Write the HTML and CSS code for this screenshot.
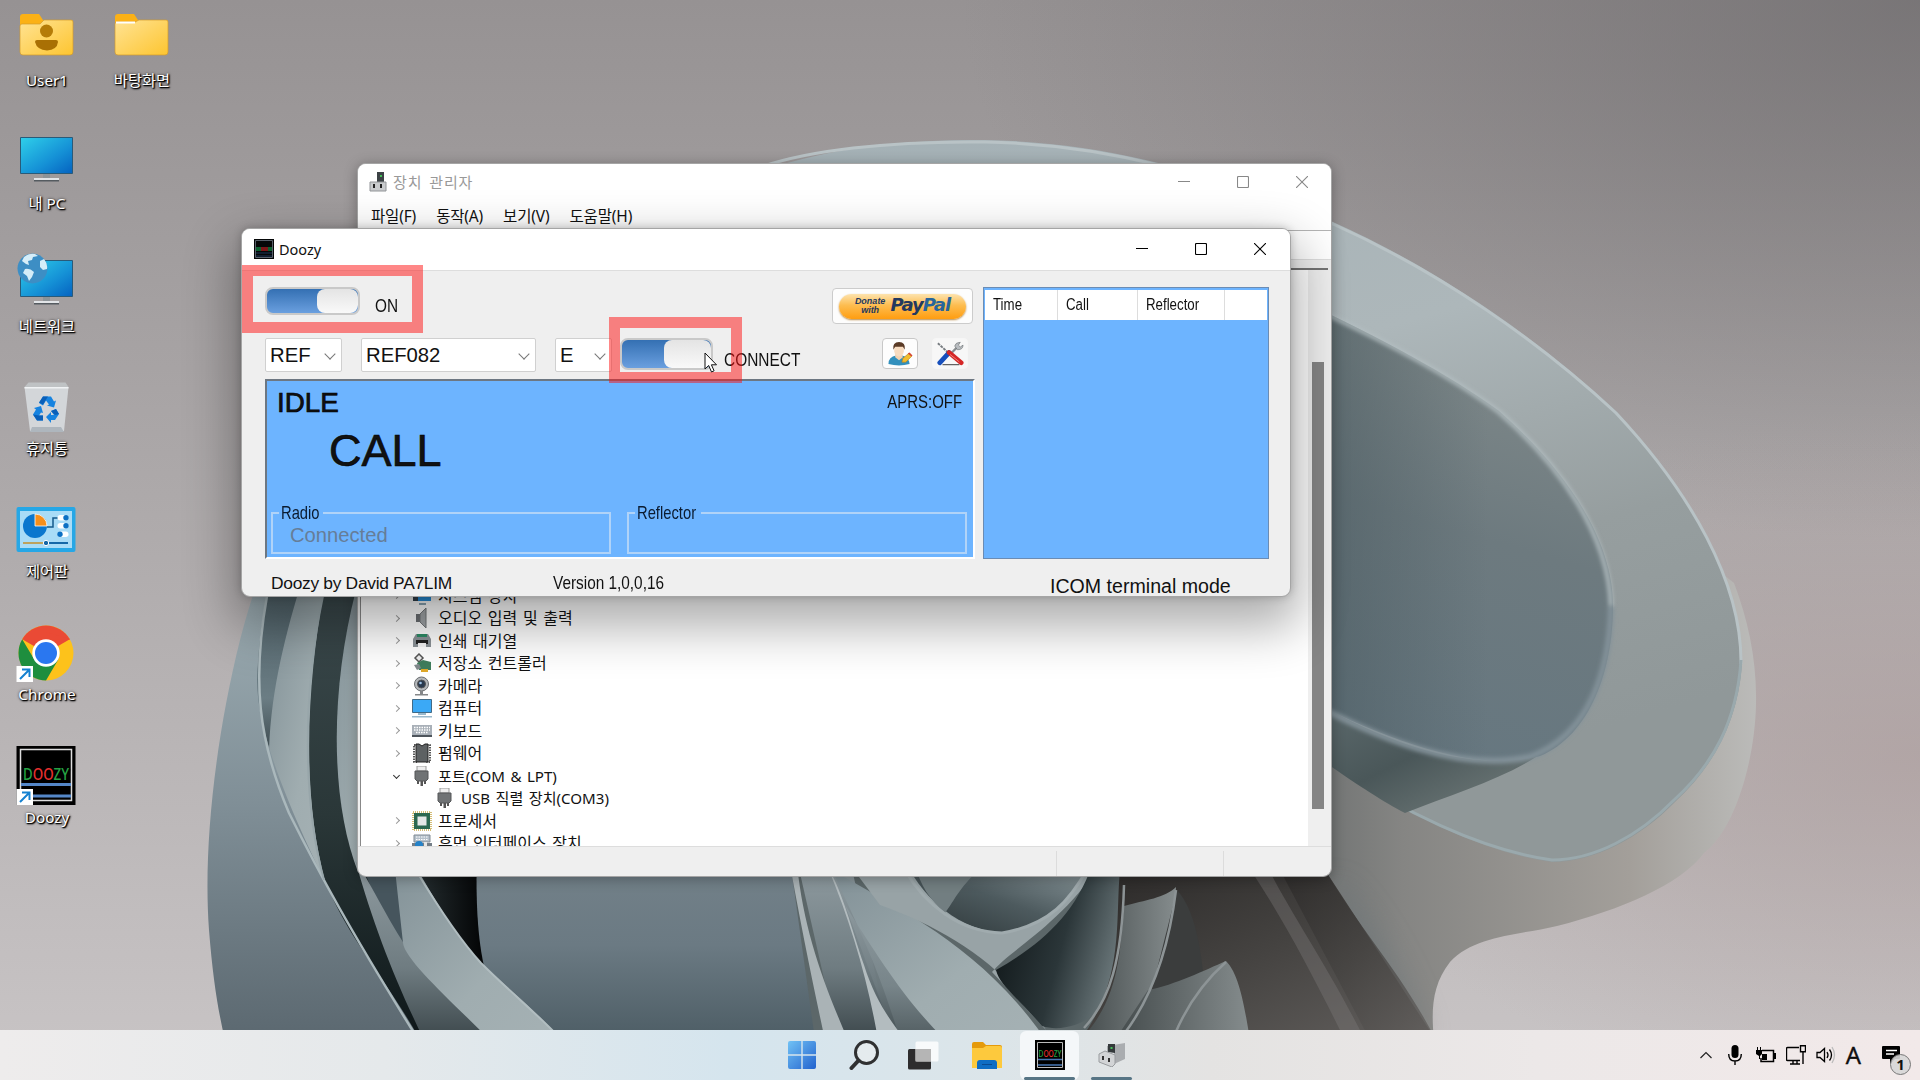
FILE: index.html
```html
<!DOCTYPE html>
<html lang="ko">
<head>
    <meta charset="UTF-8">
    <meta name="viewport" content="width=device-width, initial-scale=1.0">
    <title>Doozy</title>
    <link rel="stylesheet" href="styles.css">
</head>
<body>
<div class="desktop">
    <svg class="wallpaper" viewBox="0 0 1920 1080" preserveAspectRatio="none">
        <defs>
            <linearGradient id="bg" x1="0" y1="0" x2="0" y2="1">
                <stop offset="0" stop-color="#969293"/><stop offset=".4" stop-color="#aaa6a7"/><stop offset="1" stop-color="#c9c5c6"/>
            </linearGradient>
            <radialGradient id="bgDark" cx="1" cy="0" r=".5">
                <stop offset="0" stop-color="#6c696b" stop-opacity=".7"/><stop offset="1" stop-color="#6c696b" stop-opacity="0"/>
            </radialGradient>
            <radialGradient id="bgPink" cx="1" cy=".7" r=".32">
                <stop offset="0" stop-color="#ad9c9c" stop-opacity=".65"/><stop offset="1" stop-color="#ad9c9c" stop-opacity="0"/>
            </radialGradient>
            <linearGradient id="ring" x1="0" y1="0" x2=".4" y2="1">
                <stop offset="0" stop-color="#a3b0b5"/><stop offset=".45" stop-color="#adb7ba"/><stop offset=".75" stop-color="#969e9f"/><stop offset="1" stop-color="#909899"/>
            </linearGradient>
            <linearGradient id="under" x1="0" y1="0" x2="1" y2="0">
                <stop offset="0" stop-color="#606566"/><stop offset=".3" stop-color="#858583"/><stop offset=".75" stop-color="#a39f9a"/><stop offset="1" stop-color="#bbbbb9"/>
            </linearGradient>
            <linearGradient id="hole" x1=".6" y1="0" x2=".4" y2="1">
                <stop offset="0" stop-color="#838c8c"/><stop offset=".5" stop-color="#6d7a7f"/><stop offset="1" stop-color="#667780"/>
            </linearGradient>
            <linearGradient id="holeShade" x1="0" y1="0" x2="1" y2="0">
                <stop offset="0" stop-color="#4a5a60" stop-opacity=".65"/><stop offset=".6" stop-color="#4a5a60" stop-opacity="0"/>
            </linearGradient>
            <linearGradient id="crescent" x1="0" y1="0" x2="1" y2="1">
                <stop offset="0" stop-color="#606e71"/><stop offset=".5" stop-color="#4a5759"/><stop offset="1" stop-color="#76807f"/>
            </linearGradient>
            <linearGradient id="petal" x1="0" y1="0" x2="0" y2="1">
                <stop offset="0" stop-color="#8fa0a8"/><stop offset=".35" stop-color="#9aaab0"/><stop offset=".65" stop-color="#7f8e96"/><stop offset="1" stop-color="#5b6870"/>
            </linearGradient>
            <linearGradient id="petalDeep" x1="0" y1="0" x2="0" y2="1">
                <stop offset="0" stop-color="#4f6168"/><stop offset=".6" stop-color="#6b7d84"/><stop offset="1" stop-color="#2c383c"/>
            </linearGradient>
            <linearGradient id="gap" x1="0" y1="0" x2="0" y2="1">
                <stop offset="0" stop-color="#3b494c"/><stop offset=".5" stop-color="#2a3738"/><stop offset="1" stop-color="#0e1719"/>
            </linearGradient>
            <linearGradient id="pale" x1="0" y1="0" x2="1" y2="1">
                <stop offset="0" stop-color="#829197"/><stop offset=".6" stop-color="#a0adb0"/><stop offset="1" stop-color="#a5b1b4"/>
            </linearGradient>
            <linearGradient id="body" x1="0" y1="0" x2="0" y2="1">
                <stop offset="0" stop-color="#74828a"/><stop offset=".5" stop-color="#6b7a83"/><stop offset="1" stop-color="#4d5d65"/>
            </linearGradient>
            <linearGradient id="black" x1="0" y1="0" x2="1" y2="0">
                <stop offset="0" stop-color="#2b3538"/><stop offset="1" stop-color="#020304"/>
            </linearGradient>
            <linearGradient id="fold" x1="0" y1="0" x2="0" y2="1">
                <stop offset="0" stop-color="#919da2"/><stop offset=".6" stop-color="#6f7c81"/><stop offset="1" stop-color="#3c474b"/>
            </linearGradient>
            <linearGradient id="cup" x1="0" y1="1" x2="1" y2="0">
                <stop offset="0" stop-color="#2b3436"/><stop offset=".5" stop-color="#4d5a5e"/><stop offset="1" stop-color="#8e9b9f"/>
            </linearGradient>
            <linearGradient id="bowl" x1="0" y1=".2" x2="1" y2=".5">
                <stop offset="0" stop-color="#0e1517"/><stop offset=".5" stop-color="#2b3639"/><stop offset="1" stop-color="#7e8b8e"/>
            </linearGradient>
            <linearGradient id="brown" x1="0" y1="0" x2="1" y2="1">
                <stop offset="0" stop-color="#2a2827"/><stop offset=".5" stop-color="#454341"/><stop offset="1" stop-color="#63605e"/>
            </linearGradient>
            <linearGradient id="fin" x1="0" y1="0" x2="1" y2="0">
                <stop offset="0" stop-color="#444b4c"/><stop offset="1" stop-color="#858c8d"/>
            </linearGradient>
            <filter id="soft2"><feGaussianBlur stdDeviation="2"/></filter>
            <filter id="soft14" x="-300%" y="-50%" width="700%" height="200%"><feGaussianBlur stdDeviation="14"/></filter>
        </defs>
        <rect width="1920" height="1080" fill="url(#bg)"/>
        <rect width="1920" height="1080" fill="url(#bgDark)"/>
        <rect width="1920" height="1080" fill="url(#bgPink)"/>

        <!-- outer ring -->
        <path fill="url(#under)" d="M1250 200L1734 583C1748 620 1757 660 1756 704C1755 760 1735 830 1704 853C1680 885 1620 910 1557 926C1520 935 1475 935 1450 962C1432 985 1431 1010 1434 1040H1250Z"/>
        <path fill="#6d777a" opacity=".55" filter="url(#soft14)" d="M1333 880C1360 900 1400 960 1425 1035H1340Z"/>
        <path fill="url(#ring)" d="M700 200C780 150 900 139 985 140C1110 142 1220 175 1333 222C1440 270 1540 340 1616 411C1690 490 1742 580 1742 664C1738 720 1715 765 1675 802C1640 838 1595 862 1552 862C1480 852 1400 812 1300 745V300H700Z"/>
        <path fill="none" stroke="#b9c3c6" stroke-width="3" d="M740 175C800 148 900 141 985 142C1110 144 1220 177 1333 224C1440 272 1540 342 1616 413C1690 492 1742 582 1741 664"/>
        <path fill="none" stroke="#9aa9ad" stroke-width="3" d="M1741 660C1737 720 1714 764 1674 800C1639 836 1594 860 1552 860C1480 850 1400 810 1333 765"/>
        <path fill="url(#hole)" d="M1300 300C1380 338 1450 375 1499 411C1560 465 1613 535 1613 606C1613 670 1590 735 1540 756C1470 775 1380 735 1300 697Z"/>
        <path fill="url(#holeShade)" d="M1300 300C1380 338 1450 375 1499 411C1560 465 1613 535 1613 606C1613 670 1590 735 1540 756C1470 775 1380 735 1300 697Z"/>
        <path fill="url(#crescent)" d="M1300 694C1380 740 1460 772 1536 757C1500 780 1450 795 1405 813C1380 800 1350 780 1300 745Z"/>
        <path fill="none" stroke="#83929a" stroke-width="6" filter="url(#soft2)" d="M1300 697C1380 740 1460 772 1530 757C1590 735 1610 670 1611 606"/>
        <path fill="none" stroke="#b4bfc2" stroke-width="4" filter="url(#soft2)" d="M1300 302C1380 338 1450 375 1499 412C1560 465 1609 535 1611 606"/>

        <!-- petals on the left -->
        <path fill="url(#gap)" d="M290 590H370V870L425 1040H400L310 880Z"/>
        <path fill="url(#petalDeep)" d="M262 590H302L272 770L255 700Z"/>
        <path fill="url(#pale)" d="M299 590H324C308 680 300 790 326 885C300 850 275 800 269 760C269 700 284 640 299 590Z"/>
        <path fill="url(#petal)" d="M380 380C290 480 258 570 240 640C215 740 203 850 209 930C213 980 218 1010 225 1040H420C390 985 350 940 329 890C300 830 257 740 257 680C258 650 262 620 267 596Z"/>
        <path fill="none" stroke="#aab8bc" stroke-width="2.500" d="M267 596C252 680 258 740 289 813C320 875 350 930 416 1036"/>
        <path fill="none" stroke="#98a6aa" stroke-width="2" d="M323 596C303 690 302 800 324 880"/>
        <path fill="url(#pale)" d="M356 590C330 690 330 800 358 872H380V590Z"/>
        <path fill="url(#black)" d="M405 850H485V1000H476C440 945 420 900 405 850Z"/>
        <path fill="#46555d" d="M360 860H400L408 960L372 890Z"/>
        <path fill="url(#fold)" d="M355 860C372 885 385 915 410 953C440 990 468 1010 490 1040H424C395 980 375 930 355 860Z"/>
        <path fill="url(#body)" d="M477 850H800L828 1040H520C485 1000 474 950 477 850Z"/>
        <path fill="url(#pale)" d="M394 860H412C435 900 455 935 481 963C510 990 535 1010 562 1040H490C450 1000 405 960 403 943Z"/>
        <path fill="none" stroke="#b1bdc0" stroke-width="2" d="M417 872C440 910 460 940 481 963C510 992 535 1012 558 1036"/>

        <!-- inner folds -->
        <path fill="#5c6769" d="M790 860H1140V1040H815Z"/>
        <path fill="url(#fold)" d="M797 860H850L890 1040H838Z"/>
        <path fill="#aab3b6" d="M790 865H797C804 930 822 980 848 1040H825C812 980 800 920 790 865Z"/>
        <path fill="url(#pale)" d="M832 870C900 910 980 945 1046 1040H900C880 970 855 920 832 870Z"/>
        <path fill="url(#fold)" d="M845 905C880 960 905 1000 945 1040H895Z" opacity=".8"/>
        <path fill="#b3bcbf" d="M828 868C842 890 852 930 864 965C875 1000 890 1020 905 1040H878C868 980 850 920 828 868Z"/>
        <path fill="#98a3a6" d="M850 865H1100C1060 925 1010 950 992 972L1046 1030C1010 970 950 930 880 905Z"/>
        <path fill="url(#cup)" d="M907 865C925 900 960 930 1002 933C1050 925 1070 900 1090 865Z"/>
        <path fill="#727e81" d="M915 865H985C960 885 955 900 945 913C930 900 920 885 915 865Z"/>
        <path fill="url(#bowl)" d="M1140 870C1120 900 1125 960 1098 1010C1085 1025 1060 1032 1042 1026C1010 990 1000 985 996 970C1040 945 1075 915 1092 865Z"/>
        <path fill="none" stroke="#a0abae" stroke-width="3" d="M905 870C925 905 960 932 1002 933C1050 925 1070 900 1088 868"/>
        <path fill="url(#brown)" d="M1120 870H1325L1436 1040H1080C1125 980 1115 920 1120 870Z"/>
        <path fill="url(#fin)" d="M1124 906C1145 900 1165 898 1176 887C1172 950 1150 1000 1120 1040H1080C1120 1000 1120 950 1124 906Z"/>
        <path fill="#3b3d3d" d="M1177 890C1195 910 1200 945 1204 980L1148 1005Z"/>
        <path fill="url(#fin)" d="M1148 990C1175 985 1205 970 1226 961C1240 975 1245 1010 1250 1040H1115Z"/>
        <path fill="#807f7d" d="M1252 872C1290 930 1320 990 1345 1040H1365C1330 970 1295 920 1270 872Z" opacity=".35"/>
        <path fill="none" stroke="#8d9496" stroke-width="2.500" d="M1124 885C1122 960 1110 1000 1084 1028M1176 890C1168 955 1150 1000 1124 1034M1226 962C1200 985 1185 1010 1175 1034"/>
        <path fill="url(#brown)" opacity=".75" d="M1280 870H1325C1360 930 1400 970 1436 1040H1370Z"/>
    </svg>

    <div class="icons">
        <div class="icon-column">
            <div class="shortcut">
                <svg viewBox="0 0 60 60">
                    <defs><linearGradient id="folder" x1="0" y1="0" x2="1" y2="1"><stop offset="0" stop-color="#ffe394"/><stop offset="1" stop-color="#fdc530"/></linearGradient></defs>
                    <path d="M4 25V11q0-3 3-3h16l4 6h28q2 0 2 2v10z" fill="#fbb116"/>
                    <path d="M4 20q0-2 2-2h18l4-4h27q2 0 2 2v30q0 3-3 3H7q-3 0-3-3z" fill="url(#folder)" stroke="#d39b2c" stroke-width=".7"/>
                    <circle cx="30.500" cy="25" r="6.500" fill="#b57c08"/><path d="M21 34h19q2 0 2 2-1 8-11 8.500-10-.5-12-8.500 0-2 2-2z" fill="#a97004"/>
                </svg>
                <span>User1</span>
            </div>
            <div class="shortcut">
                <svg viewBox="0 0 60 60">
                    <defs><linearGradient id="screen" x1="0" y1="0" x2="1" y2="1"><stop offset="0" stop-color="#2fd0ea"/><stop offset=".6" stop-color="#1591d6"/><stop offset="1" stop-color="#0562c0"/></linearGradient></defs>
                    <path d="M27 44h7v6h-7z" fill="#8c9398"/><path d="M18 49h25v3H18z" fill="#e2e5e8"/><path d="M18 51h25v1.500H18z" fill="#555b60"/>
                    <path d="M4.500 8.500h52v36h-52z" fill="url(#screen)" stroke="#2a5a78"/>
                </svg>
                <span>내 PC</span>
            </div>
            <div class="shortcut">
                <svg viewBox="0 0 60 60">
                    <path d="M27 44h7v6h-7z" fill="#8c9398"/><path d="M18 49h25v3H18z" fill="#e2e5e8"/><path d="M18 51h25v1.500H18z" fill="#555b60"/>
                    <path d="M4.500 8.500h52v36h-52z" fill="url(#screen)" stroke="#2a5a78"/>
                    <circle cx="16.500" cy="16.500" r="15" fill="#3d8ec4"/>
                    <path d="M8 5q5-4 11-3l3 2-5 1-1 3-4 1 1 4-3-1-4-3zM9 17q5-1 9 3l-2 5-3 4-2-5-4-3zM24 9l4-2q4 5 3 10l-4 1-3-3z" fill="#d5edf8"/>
                </svg>
                <span>네트워크</span>
            </div>
            <div class="shortcut">
                <svg viewBox="0 0 60 60">
                    <path d="M8.500 13L14 57h34l4.500-44z" fill="#d3d6d9"/><path d="M8.500 13l4-4.500h37l3 4.500z" fill="#bfc2c4"/><path d="M8.500 13h44v1.500h-44z" fill="#f0f2f4"/><path d="M16 53h29l3 5H14z" fill="#aeb6bd"/>
                    <path d="M23 29l4-6.500h8l3 5 2-1-2 7-7-2 2-1-3-4-3 5zM18 34l7-2 2 7-2-.5-2 3h4v5h-6l-4-6 3-5zM35 37l5-2 3 5-4 6h-4v3l-5-6 5-5v3h3z" fill="#1683e0"/>
                    <path d="M27 22.500h5l-5 8-4-2zM21 46.500l-4-6 6 1h4v5zM35 37l5-2 3 5-4 1z" fill="#0a5fb8"/>
                </svg>
                <span>휴지통</span>
            </div>
            <div class="shortcut">
                <svg viewBox="0 0 60 60">
                    <rect y="10" x=".5" width="59" height="45" rx="2" fill="#26a7e6"/><path d="M4 14h52v37H4z" fill="#a9dcf7"/>
                    <circle cx="19" cy="29" r="12" fill="#0b77ce"/><path d="M19 29V17a12 12 0 0 1 12 12z" fill="#f78f1b" stroke="#fff" stroke-width=".8"/>
                    <path d="M31 30h6v-9h5" fill="none" stroke="#155a8d" stroke-width="1.500"/>
                    <rect x="41.500" y="18" width="11" height="5.500" rx="2.700" fill="#fff"/><rect x="41.500" y="26" width="11" height="5.500" rx="2.700" fill="#fff"/><rect x="41.500" y="34.500" width="11" height="5.500" rx="2.700" fill="#fff"/>
                    <circle cx="50" cy="20.700" r="2.700" fill="#0b70c4"/><circle cx="50" cy="28.700" r="2.700" fill="#0b70c4"/><circle cx="44" cy="37.200" r="2.700" fill="#0b70c4"/>
                    <path d="M7 45h22v2H7z" fill="#bda25e"/><path d="M30 45h22v2H30z" fill="#1668a8"/><circle cx="30" cy="46" r="2.700" fill="#1668a8" stroke="#fff"/>
                </svg>
                <span>제어판</span>
            </div>
            <div class="shortcut">
                <svg viewBox="0 0 60 60">
                    <circle cx="30" cy="33" r="27.500" fill="#fdc21b"/>
                    <path d="M30 33L6.200 19.200A27.500 27.500 0 0 1 53.800 19.200z" fill="#ea4a35"/><path d="M30 19.500h24L53.500 18.700 30 12z" fill="#ea4a35"/>
                    <path d="M6.200 19.200A27.500 27.500 0 0 0 30 60.500L42 40 30 33 18 39z" fill="#1e8e3e"/>
                    <circle cx="30" cy="33" r="13.700" fill="#fff"/><circle cx="30" cy="33" r="11" fill="#2a77f0"/>
                    <path d="M.5 46H17v16H.5z" fill="#fff"/><path d="M4 59l9-9M6 49.500h7.500v7.500" fill="none" stroke="#1581d0" stroke-width="2"/>
                </svg>
                <span>Chrome</span>
            </div>
            <div class="shortcut">
                <svg viewBox="0 0 60 60">
                    <path d="M.5 3h59v59H.5z" fill="#000"/><path d="M4.500 6.500h51v51h-51z" fill="none" stroke="#ddd" stroke-width="1.500"/>
                    <path d="M5 41.500h50M5 53h50" stroke="#5487c9" stroke-width="2.800"/>
                    <text x="7" y="37" class="doozy-logo" textLength="46" lengthAdjust="spacingAndGlyphs"><tspan fill="#25a244">D</tspan><tspan fill="#e8302f">OO</tspan><tspan fill="#25a244">ZY</tspan></text>
                    <path d="M.5 46H17v16H.5z" fill="#fff"/><path d="M4 59l9-9M6 49.500h7.500v7.500" fill="none" stroke="#1581d0" stroke-width="2"/>
                </svg>
                <span>Doozy</span>
            </div>
        </div>
        <div class="icon-column">
            <div class="shortcut">
                <svg viewBox="0 0 60 60">
                    <path d="M4 25V11q0-3 3-3h16l4 6h28q2 0 2 2v10z" fill="#fbb116"/>
                    <path d="M4 18q0-2 2-2h18l4-2h27q2 0 2 2v30q0 3-3 3H7q-3 0-3-3z" fill="url(#folder)" stroke="#d39b2c" stroke-width=".7"/><path d="M5 16.500h19" stroke="#fff" stroke-width="2"/>
                </svg>
                <span>바탕화면</span>
            </div>
        </div>
    </div>

    <div class="window device-manager">
        <div class="titlebar">
            <svg class="app-icon" viewBox="0 0 18 21"><path d="M8 1h7v10H8z" fill="#3c4245"/><path d="M11 4h2v2h-2z" fill="#45c05a"/><path d="M1 11h16v9H1z" fill="#c9cbcd" stroke="#929598"/><path d="M4 13h2v4H4zM11 13h2v4h-2z" fill="#222"/></svg>
            <span>장치 관리자</span>
            <div class="controls">
                <svg viewBox="0 0 12 12"><path d="M0 5.500h12"/></svg>
                <svg viewBox="0 0 12 12"><rect x=".5" y=".5" width="11" height="11" rx="1"/></svg>
                <svg viewBox="0 0 12 12"><path d="M0 0l12 12M12 0L0 12"/></svg>
            </div>
        </div>
        <div class="menubar"><span>파일(F)</span><span>동작(A)</span><span>보기(V)</span><span>도움말(H)</span></div>
        <div class="toolbar"></div>
        <div class="tree-area">
            <ul class="tree">
                <li><i class="arrow"></i><svg viewBox="0 0 20 20"><path d="M1 2h18v13H1z" fill="#2892df"/><path d="M1 2h5v13H1z" fill="#35424c"/><path d="M7 17h7v2H7z" fill="#8ba5b4"/></svg><span>시스템 장치</span></li>
                <li><i class="arrow"></i><svg viewBox="0 0 20 20"><path d="M4 6h4v8H4z" fill="#6c6f73"/><path d="M8 6l6-6v20l-6-6z" fill="#a1a5a8" stroke="#737679"/></svg><span>오디오 입력 및 출력</span></li>
                <li><i class="arrow"></i><svg viewBox="0 0 20 20"><path d="M4 3h12l3 5v8H1V8z" fill="#8b9297"/><path d="M5 3h10v3H5z" fill="#2d8c66"/><path d="M4 9h12v4H4z" fill="#222"/><path d="M6 12h8v4H6z" fill="#f4f4f4"/></svg><span>인쇄 대기열</span></li>
                <li><i class="arrow"></i><svg viewBox="0 0 20 20"><path d="M7 1l4 4-4 4-4-4z" fill="#eee" stroke="#555" stroke-width="1.500"/><path d="M5 10l6-3 8 2v8H7z" fill="#3f7d5c"/><path d="M9 16h7v3H9z" fill="#dfa829"/><path d="M2 12l5-1 2 4-4 2z" fill="#82898c"/></svg><span>저장소 컨트롤러</span></li>
                <li><i class="arrow"></i><svg viewBox="0 0 20 20"><circle cx="9.500" cy="8" r="7" fill="#b4b7ba" stroke="#6b6e71"/><circle cx="9.500" cy="8" r="4" fill="#29394d" stroke="#555"/><circle cx="8.500" cy="7" r="1.300" fill="#9fc4e8"/><path d="M8 15h3v3H8zM3 18h13v1.500H3z" fill="#858789"/></svg><span>카메라</span></li>
                <li><i class="arrow"></i><svg viewBox="0 0 20 20"><path d="M.5 1.500h19v13H.5z" fill="#3ba9f6" stroke="#416b87"/><path d="M6 15h8v2H6zM0 18h20v1.500H0z" fill="#9ab9cc"/></svg><span>컴퓨터</span></li>
                <li><i class="arrow"></i><svg viewBox="0 0 20 20"><path d="M0 4h20v12H0z" fill="#a9b0b8"/><path d="M2 6.500h16M2 9h16M4 11.500h12" stroke="#fff" stroke-width="1.300" stroke-dasharray="1.500 1"/><path d="M0 14h20v2H0z" fill="#4e555c"/></svg><span>키보드</span></li>
                <li><i class="arrow"></i><svg viewBox="0 0 20 20"><path d="M2 2h3v17H2zM15 2h3v17h-3z" fill="none" stroke="#222" stroke-width="1.500" stroke-dasharray="1.500 1"/><path d="M4 1h3l3 2 3-2h3v18H4z" fill="#5d6163" stroke="#222"/></svg><span>펌웨어</span></li>
                <li class="open"><i class="arrow"></i><svg viewBox="0 0 20 20"><path d="M5 0h9v5H5z" fill="#eee" stroke="#999"/><path d="M3 5h13v8l-2 2H5l-2-2z" fill="#707375" stroke="#545759"/><path d="M5 15h2v3H5zM8.500 15h2.500v5H8.500zM12 15h2v3h-2z" fill="#555"/></svg><span>포트(COM &amp; LPT)</span></li>
                <li class="child"><svg viewBox="0 0 20 20"><path d="M5 0h9v5H5z" fill="#eee" stroke="#999"/><path d="M3 5h13v8l-2 2H5l-2-2z" fill="#707375" stroke="#545759"/><path d="M5 15h2v3H5zM8.500 15h2.500v5H8.500zM12 15h2v3h-2z" fill="#555"/></svg><span>USB 직렬 장치(COM3)</span></li>
                <li><i class="arrow"></i><svg viewBox="0 0 20 20"><path d="M1 1h18v18H1z" fill="none" stroke="#c6a84a" stroke-width="1.500" stroke-dasharray="1 1"/><path d="M2 2h16v16H2z" fill="#2b6850"/><path d="M5.500 5.500h9v9h-9z" fill="#e4e7e6"/></svg><span>프로세서</span></li>
                <li><i class="arrow"></i><svg viewBox="0 0 20 20"><path d="M2 2h16v7H2z" fill="#b5c0ca" stroke="#818b94"/><path d="M4 4h12M4 6.500h12" stroke="#fff" stroke-dasharray="1.500 1"/><path d="M0 10h20v8H0z" fill="#747e87"/><circle cx="7" cy="12" r="4" fill="#2582c8"/><path d="M12 9h3v9h-3z" fill="#e6e6e6"/></svg><span>휴먼 인터페이스 장치</span></li>
            </ul>
            <div class="scrollbar"><div class="thumb"></div></div>
        </div>
        <div class="statusbar"><div></div><div></div><div></div></div>
    </div>

    <div class="window doozy">
        <div class="titlebar">
            <svg class="app-icon" viewBox="0 0 20 20"><path d="M0 0h20v20H0z" fill="#050708"/><path d="M1.500 1.500h17v17h-17z" fill="none" stroke="#59616b"/><path d="M2 8h5v4H2zM14 8h4v4h-4z" fill="#0c6130"/><path d="M7 8h7v4H7z" fill="#7e1618"/><path d="M2 14h16M2 17h16" stroke="#1d3659"/></svg>
            <span class="title">Doozy</span>
            <div class="controls">
                <svg viewBox="0 0 12 12"><path d="M0 5.500h12"/></svg>
                <svg viewBox="0 0 12 12"><rect x=".5" y=".5" width="11" height="11" rx="1"/></svg>
                <svg viewBox="0 0 12 12"><path d="M0 0l12 12M12 0L0 12"/></svg>
            </div>
        </div>
        <div class="doozy-body">
            <div class="main">
                <div class="power-row">
                    <div class="toggle power"><div class="knob"></div></div>
                    <span class="narrow on-label">ON</span>
                    <button class="paypal"><span class="pill"><small>Donate<br>with</small><b>Pay<em>Pal</em></b></span></button>
                </div>
                <div class="connect-row">
                    <div class="combo type">REF</div>
                    <div class="combo name">REF082</div>
                    <div class="combo module">E</div>
                    <div class="toggle connect"><div class="knob"></div></div>
                    <span class="narrow connect-label">CONNECT</span>
                    <button class="tool-button first"><svg viewBox="0 0 26 26"><path d="M1 24q0-8 8-9h6q7 1 8 9-11 3-22 0z" fill="#3290bd"/><path d="M8 13h7l1 4-4 3-4-3z" fill="#f3d2b0"/><path d="M7 4h10v7q-1 5-5 5t-5-5z" fill="#f8dcc0"/><path d="M6 9Q5 1 12 1t6 8l-2-3H8z" fill="#5a3a25"/><path d="M15 22l1-4 6-5 3 3-6 6z" fill="#f2bd2c" stroke="#b17a18" stroke-width=".6"/><path d="M21 13l2-1 3 3-1 1z" fill="#d6452f"/></svg></button>
                    <button class="tool-button flat"><svg viewBox="0 0 30 26"><path d="M2 2l12 11" stroke="#777c80" stroke-width="2" stroke-dasharray="3 1"/><path d="M24 5l-8 8" stroke="#888d90" stroke-width="2.500"/><path d="M20 5q1-4 6-4l-2 3 2 2 3-2q0 5-6 5z" fill="#b8bcc0" stroke="#606467" stroke-width=".6"/><path d="M14 12L4 23" stroke="#174fbc" stroke-width="5" stroke-linecap="round"/><path d="M14 12l13 11" stroke="#d52626" stroke-width="5" stroke-linecap="round"/><path d="M15 14l10 8" stroke="#f08a80" stroke-width="1"/><path d="M7 25h18" stroke="#333"/></svg></button>
                </div>
                <div class="status-panel">
                    <div class="status-top"><span class="idle">IDLE</span><span class="narrow aprs">APRS:OFF</span></div>
                    <div class="call">CALL</div>
                    <div class="groups">
                        <fieldset><legend class="radio"><span class="narrow">Radio</span></legend><span>Connected</span></fieldset>
                        <fieldset><legend class="reflector"><span class="narrow">Reflector</span></legend></fieldset>
                    </div>
                </div>
                <div class="footer"><span class="author">Doozy by David PA7LIM</span><span class="narrow version">Version 1,0,0,16</span></div>
            </div>
            <div class="side">
                <div class="log"><div class="log-head"><div><span class="narrow">Time</span></div><div><span class="narrow">Call</span></div><div><span class="narrow">Reflector</span></div><div></div></div></div>
                <div class="mode">ICOM terminal mode</div>
            </div>
        </div>
    </div>

    <div class="mark mark-power"></div>
    <div class="mark mark-connect"></div>
    <svg class="cursor" viewBox="0 0 14 21"><path d="M1 1v16l3.700-3.500L7.500 20l2.600-1.200-2.700-6H12.500z" fill="#fff" stroke="#111"/></svg>

    <div class="taskbar">
        <div class="task-apps">
            <div class="task"><svg width="28" height="28" viewBox="0 0 28 28"><defs><linearGradient id="win" x1="0" y1="0" x2="1" y2="1"><stop offset="0" stop-color="#71c2f5"/><stop offset="1" stop-color="#2262ce"/></linearGradient></defs><path d="M0 2q0-2 2-2h11.300v13.300H0zM14.700 0H26q2 0 2 2v11.300H14.700zM0 14.700h13.300V28H2q-2 0-2-2zM14.700 14.700H28V26q0 2-2 2H14.700z" fill="url(#win)"/></svg></div>
            <div class="task"><svg width="30" height="30" viewBox="0 0 30 30"><circle cx="17.500" cy="12.500" r="11" fill="#e9eef0" fill-opacity=".7" stroke="#2f3031" stroke-width="3"/><path d="M9.500 20.500L2.500 28" stroke="#2f3031" stroke-width="4" stroke-linecap="round"/></svg></div>
            <div class="task"><svg width="31" height="29" viewBox="0 0 31 29"><rect y="8" width="23" height="20.500" rx="1.500" fill="#2e2d2e"/><rect x="7.500" y=".5" width="23" height="20" rx="1.500" fill="#fff" fill-opacity=".8"/><path d="M7.500 8H23v12.500H7.500z" fill="#b5b5b5"/></svg></div>
            <div class="task"><svg width="30" height="27" viewBox="0 0 30 27"><path d="M0 2q0-2 2-2h9l3 3h14q2 0 2 2v5H0z" fill="#e59a0b"/><path d="M0 6h11l3-2h14q2 0 2 2v20H0z" fill="#fdc93d"/><path d="M5 27v-6q0-3 3-3h14q3 0 3 3v6z" fill="#0e6dc4"/><path d="M10 22.500h10" stroke="#0a4b91"/></svg></div>
            <div class="task active"><svg width="30" height="30" viewBox="0 0 30 30"><path d="M0 0h30v30H0z"/><path d="M2.500 2.500h25v25h-25z" fill="none" stroke="#bbb"/><path d="M3 19.500h24M3 25h24" stroke="#4777b5" stroke-width="1.500"/><text x="3.500" y="17" class="doozy-logo small" textLength="23" lengthAdjust="spacingAndGlyphs"><tspan fill="#25a244">D</tspan><tspan fill="#e8302f">OO</tspan><tspan fill="#25a244">ZY</tspan></text></svg></div>
            <div class="task running"><svg width="28" height="24" viewBox="0 0 28 24"><path d="M9 3l18-3v16l-11 5V9H9z" fill="#aaadb0"/><path d="M10 1h7v9l-7-1z" fill="#34393b"/><path d="M12.500 4h2v2h-2z" fill="#45c05a"/><path d="M1 11l6-3 10 4v9l-3 3L1 19z" fill="#d2d4d6" stroke="#999c9f"/><path d="M4 13h2v4H4zM10 15h2v4h-2z" fill="#333"/></svg></div>
        </div>
        <div class="tray">
            <svg width="12" height="8" viewBox="0 0 12 8"><path d="M.5 7L6 1.500 11.500 7" fill="none" stroke="#222" stroke-width="1.200"/></svg>
            <svg width="14" height="20" viewBox="0 0 14 20"><rect x="3.500" width="7" height="13" rx="3.500"/><path d="M.7 9q0 7 6.300 7t6.300-7M7 16v4" fill="none" stroke="#000" stroke-width="1.400"/></svg>
            <svg width="20" height="17" viewBox="0 0 20 17"><path d="M6 3.500h11.500v11H5V11" fill="none" stroke="#000" stroke-width="1.500"/><path d="M18 6h2v6h-2zM0 3h6v4L4 9v3H3V9L0 7zM1 0h1v3H1zM4 0h1v3H4zM6 7h5v6H6z"/></svg>
            <svg width="20" height="20" viewBox="0 0 20 20"><path d="M13 2.500H1.500q-1 0-1 1v11q0 1 1 1H14M7 16v3M11 16v3M4 19h10M14.500.700h5v6h-5zM17 7v12" fill="none" stroke="#000" stroke-width="1.400"/></svg>
            <svg width="20" height="18" viewBox="0 0 20 18"><path d="M1 6.500h3L8.500 2.500v13L4 11.500H1zM11 6q2 3 0 6M13.500 3.500q4 5.500 0 11" fill="none" stroke="#000" stroke-width="1.300"/><path d="M16 1q5 8 0 16" fill="none" stroke="#bbb" stroke-width="1.300"/></svg>
            <span class="ime">A</span>
            <div class="notice"><svg width="18" height="20" viewBox="0 0 18 20"><path d="M1 1h16q1 0 1 1v11q0 1-1 1h-4l-5 5v-5H1q-1 0-1-1V2q0-1 1-1z"/><path d="M4 5.500h11M4 9h8" stroke="#fff" stroke-width="1.300"/></svg><span class="badge">1</span></div>
        </div>
    </div>
</div>
</body>
</html>
```
FILE: styles.css
```css
* {
    box-sizing: border-box;
}
body {
    margin: 0;
    overflow: hidden;
    font-family: "Noto Sans", "Noto Sans CJK KR", sans-serif;
    font-size: 15px;
    color: #111;
}
.desktop {
    position: relative;
    width: 1920px;
    height: 1080px;
    overflow: hidden;
}
.wallpaper {
    position: absolute;
    inset: 0;
    width: 100%;
    height: 100%;
}
svg {
    display: block;
    flex-shrink: 0;
}
button {
    padding: 0;
    font: inherit;
}
.narrow {
    display: inline-block;
    transform: scaleX(.83);
    transform-origin: left center;
    white-space: nowrap;
}
.doozy-logo {
    font: 500 15.5px "Noto Sans", sans-serif;
}
.doozy-logo.small {
    font-size: 8px;
}

/* desktop shortcuts */
.icons {
    position: absolute;
    top: 6px;
    left: 0;
    display: flex;
}
.icon-column {
    width: 95px;
}
.shortcut {
    height: 122.8px;
    width: 94px;
    display: flex;
    flex-direction: column;
    align-items: center;
    color: #fff;
    font-size: 15.3px;
    line-height: 22px;
    text-shadow: 1px 1px 2px #000, 1px 1px 1px #000, 0 0 3px rgba(0, 0, 0, .6);
}
.shortcut svg {
    width: 60px;
    height: 60px;
    overflow: visible;
    margin: 0 2px 3px 0;
}

/* windows */
.window {
    position: absolute;
    display: flex;
    flex-direction: column;
    overflow: hidden;
    border: 1px solid #a5a5a5;
    border-radius: 9px;
    background: #efefef;
}
.titlebar {
    display: flex;
    align-items: center;
    background: #fff;
    flex-shrink: 0;
}
.controls {
    display: flex;
    gap: 47px;
    margin-left: auto;
}
.controls svg {
    width: 12px;
    height: 12px;
    fill: none;
    stroke: #000;
    stroke-width: 1.1;
}

.device-manager {
    left: 357px;
    top: 163px;
    width: 975px;
    height: 714px;
    box-shadow: 0 2px 14px rgba(0, 0, 0, .3);
}
.device-manager .titlebar {
    height: 36px;
    padding: 0 23px 0 11px;
    color: #999;
}
.device-manager .titlebar span {
    margin-top: -2px;
    word-spacing: 2px;
    letter-spacing: .9px;
}
.device-manager .app-icon {
    width: 18px;
    height: 21px;
    margin: -1px 6px 0 0;
}
.device-manager .controls svg {
    stroke: #888;
}
.menubar {
    display: flex;
    gap: 20px;
    height: 31px;
    padding: 5px 0 0 13px;
    background: #fff;
    border-bottom: 1px solid #b4b4b4;
    line-height: 22px;
    font-size: 15.5px;
    letter-spacing: -.15px;
}
.toolbar {
    height: 29px;
    background: #fff;
    border-bottom: 1px solid #ddd;
}
.tree-area {
    display: flex;
    flex: 1;
    margin: 8px 3px 0 2px;
    border-top: 2px solid #747474;
    border-left: 1px solid #888;
    background: #fff;
    overflow: hidden;
}
.tree {
    display: flex;
    flex-direction: column;
    justify-content: flex-end;
    flex: 1;
    list-style: none;
    margin: 0 0 -8.5px;
    padding: 0 0 0 33px;
    font-size: 16px;
    word-spacing: 1.5px;
}
.tree li {
    display: flex;
    align-items: center;
    height: 22.5px;
    flex-shrink: 0;
    line-height: 22px;
}
.tree svg {
    width: 20px;
    height: 20px;
    margin: 0 6px 0 13px;
}
.tree .child svg {
    margin: 0 6px 0 41px;
}
.tree .child, .tree .open {
    font-size: 15.1px;
}
.arrow {
    width: 5px;
    height: 5px;
    border: solid #999;
    border-width: 1px 1px 0 0;
    transform: rotate(45deg);
}
.open .arrow {
    border-color: #333;
    transform: rotate(135deg);
}
.scrollbar {
    width: 20px;
    padding: 92px 4px 0;
    background: #efefef;
}
.thumb {
    height: 447px;
    background: #858585;
}
.statusbar {
    display: flex;
    height: 30px;
    border-top: 1px solid #ddd;
}
.statusbar div {
    width: 167px;
    margin-top: 4px;
    border-right: 1px solid #dcdcdc;
}
.statusbar div:first-child {
    width: 699px;
}
.statusbar div:last-child {
    flex: 1;
    width: auto;
    border: 0;
}

.doozy {
    left: 241px;
    top: 228px;
    width: 1050px;
    height: 369px;
    box-shadow: 0 22px 50px 8px rgba(0, 0, 0, .32), 0 0 8px rgba(0, 0, 0, .22);
}
.doozy .titlebar {
    height: 42px;
    padding: 0 24px 2px 12px;
    border-bottom: 1px solid #ddd;
}
.doozy .app-icon {
    width: 20px;
    height: 20px;
    margin: 1px 5px 0 0;
}
.title {
    font-size: 14.5px;
}
.doozy-body {
    display: flex;
    gap: 8px;
    padding: 16px 0 0 23px;
    font-family: "Liberation Sans", sans-serif;
}
.main {
    width: 710px;
}
.power-row {
    display: flex;
    height: 37px;
    margin-bottom: 14px;
}
.toggle {
    border: 2px solid #c9c9c9;
    border-radius: 8px;
    background: linear-gradient(#3470b3, #6a9fdf);
    overflow: hidden;
}
.knob {
    height: 100%;
    margin-left: auto;
    border-radius: 8px;
    background: linear-gradient(#e4e4e4, #f9f9f9);
}
.power {
    width: 95px;
    height: 28px;
}
.power .knob {
    width: 41px;
}
.connect {
    width: 93px;
    height: 32px;
    margin-left: 8px;
}
.connect .knob {
    width: 47px;
}
.on-label {
    margin: 8px 0 0 15px;
    font-size: 18.5px;
    line-height: 22px;
}
.paypal {
    width: 141px;
    height: 36px;
    margin: 1px 2px 0 auto;
    padding: 4px 6px;
    border: 1px solid #ccc;
    border-radius: 4px;
    background: #fdfdfd;
}
.pill {
    display: flex;
    align-items: center;
    justify-content: center;
    gap: 5px;
    height: 25px;
    border-radius: 13px;
    background: linear-gradient(#fde3ae, #fdbd50 45%, #ff9d10);
    box-shadow: 0 1px 2px #b98a45;
    color: #23395f;
}
.pill small {
    font: italic bold 9px/9px "Liberation Sans", sans-serif;
}
.pill b {
    margin-top: -3px;
    font: italic bold 18px/20px "DejaVu Sans", sans-serif;
    letter-spacing: -1px;
}
.pill em {
    color: #28659b;
}
.connect-row {
    display: flex;
    height: 34px;
    margin-bottom: 7px;
}
.combo {
    position: relative;
    height: 34px;
    padding: 0 4px;
    border: 1px solid #d0d0d0;
    border-radius: 2px;
    background: #fff;
    font-size: 20.3px;
    line-height: 32px;
}
.combo::after {
    content: "";
    position: absolute;
    top: 11px;
    right: 7px;
    width: 7px;
    height: 7px;
    border: solid #777;
    border-width: 0 1.4px 1.4px 0;
    transform: rotate(45deg);
}
.type {
    width: 77px;
}
.name {
    width: 175px;
    margin: 0 19px;
}
.module {
    width: 57px;
}
.module::after {
    right: 7px;
}
.connect-label {
    margin: 11px auto 0 11px;
    font-size: 18.6px;
    line-height: 22px;
}
.tool-button {
    display: flex;
    align-items: center;
    justify-content: center;
    width: 36px;
    height: 31px;
    margin: 0 7px 0 0;
    border: 1px solid #c8c8c8;
    border-radius: 4px;
    background: #fdfdfd;
}
.tool-button svg {
    width: 28px;
    height: 25px;
}
.tool-button.first {
    margin-right: 14px;
}
.tool-button.flat {
    border-color: #f6f6f6;
    background: #f7f7f7;
}
.status-panel {
    height: 180px;
    border: 2px solid;
    border-color: #6d7782 #fff #fff #6d7782;
    background: #6db4ff;
}
.status-top {
    display: flex;
    justify-content: space-between;
    height: 44px;
    padding: 7px 11px 0 10px;
}
.idle {
    font-size: 27.8px;
    line-height: 29px;
    -webkit-text-stroke: .7px #000;
}
.aprs {
    font-size: 18px;
    line-height: 29px;
    transform-origin: right center;
}
.call {
    padding-left: 62px;
    font-size: 45px;
    line-height: 51px;
    height: 79px;
    -webkit-text-stroke: .6px #000;
}
.groups {
    display: flex;
    gap: 16px;
    padding-left: 4px;
}
.groups fieldset {
    width: 340px;
    height: 50px;
    margin: 0;
    padding: 2px 17px;
    border: 2px solid #b0d3f8;
    font-size: 20.2px;
    color: #667d98;
}
.groups legend {
    margin-left: -11px;
    padding: 0 2px;
    font-size: 17.8px;
    line-height: 18px;
    color: #0b1b30;
}
.radio {
    width: 44px;
}
.reflector {
    width: 66px;
}
.footer {
    display: flex;
    padding: 13px 0 0 6px;
    line-height: 22px;
}
.author {
    width: 282px;
    font-size: 17.4px;
    letter-spacing: -.3px;
}
.version {
    font-size: 18.5px;
}
.log {
    width: 286px;
    height: 272px;
    padding: 2px 1px;
    border: 1px solid #6b8cb4;
    background: #6db4ff;
}
.log-head {
    display: flex;
    height: 30px;
    background: #fff;
    font-size: 16px;
    line-height: 29px;
}
.log-head div {
    flex-shrink: 0;
    width: 73px;
    padding-left: 8px;
    border-right: 1px solid #ddd;
}
.log-head div:nth-child(2) {
    width: 80px;
}
.log-head div:nth-child(3) {
    width: 87px;
}
.log-head div:last-child {
    width: 40px;
    border: 0;
}
.mode {
    padding: 15px 0 0 67px;
    font-size: 19.6px;
    line-height: 24px;
    white-space: nowrap;
}

/* highlight frames over the two switches */
.mark {
    position: absolute;
    border: 11px solid rgba(255, 16, 16, .5);
}
.mark-power {
    left: 242px;
    top: 265px;
    width: 181px;
    height: 68px;
}
.mark-connect {
    left: 609px;
    top: 317px;
    width: 133px;
    height: 66px;
}
.cursor {
    position: absolute;
    left: 704px;
    top: 352px;
    width: 14px;
    height: 21px;
}

.taskbar {
    position: absolute;
    left: 0;
    bottom: 0;
    display: flex;
    align-items: center;
    width: 1920px;
    height: 50px;
    background: linear-gradient(90deg, #eeecec, #e5e9eb 20%, #d5e5ee 38%, #dce5e9 52%, #e4e3e2 63%, #ece8e8 80%, #f2e9e9);
}
.task-apps {
    display: flex;
    gap: 3px;
    margin-left: 772px;
}
.task {
    position: relative;
    display: flex;
    align-items: center;
    justify-content: center;
    width: 59px;
    height: 49px;
}
.task:nth-child(3) {
    padding-right: 5px;
}
.task:nth-child(4) {
    padding-right: 2px;
}
.task.active {
    border-radius: 6px;
    background: #f4f7f9;
}
.task.active::after, .task.running::after {
    content: "";
    position: absolute;
    bottom: 0;
    width: 51px;
    height: 3px;
    border-radius: 2px;
    background: #577585;
}
.task.running::after {
    width: 41px;
}
.tray {
    display: flex;
    align-items: center;
    gap: 10px;
    margin-left: auto;
    padding-right: 14px;
}
.tray svg:first-child {
    margin-right: 6px;
}
.tray svg:nth-child(2) {
    margin-right: 4px;
}
.ime {
    font: 24px/24px "Open Sans", sans-serif;
    -webkit-text-stroke: .4px #000;
}
.notice {
    position: relative;
    margin-left: 11px;
}
.badge {
    position: absolute;
    left: 8px;
    top: 9px;
    width: 21px;
    height: 21px;
    border: 1px solid #777;
    border-radius: 50%;
    background: rgba(215, 215, 215, .9);
    text-align: center;
    font: bold 15px/19px "Open Sans", sans-serif;
}
```
